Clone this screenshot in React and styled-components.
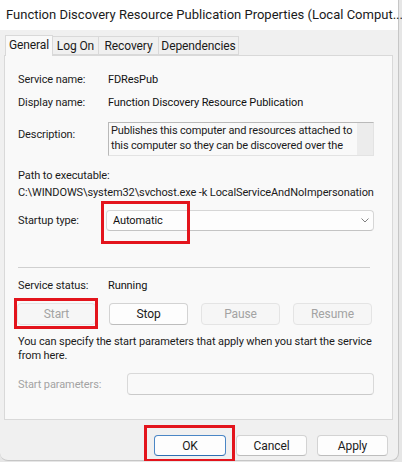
import React from 'react'
import styled, { createGlobalStyle } from 'styled-components'

const GlobalStyle = createGlobalStyle`
  html, body {
    margin: 0;
    padding: 0;
  }
  body {
    background: #e6e6e6;
    font-family: Roboto, "Noto Sans", "Liberation Sans", sans-serif;
    font-size: 11px;
    letter-spacing: -0.1px;
    color: #1b1b1b;
  }
`

const Window = styled.div`
  width: 398px;
  height: 460px;
  background: #f0f0f0;
  border-right: 1px solid #c6c6c6;
  border-bottom: 1px solid #c6c6c6;
  border-radius: 0 0 8px 8px;
  display: flex;
  flex-direction: column;
`

const TitleBar = styled.div`
  height: 28px;
  display: flex;
  align-items: center;
  justify-content: space-between;
  padding: 0 9px 2px 6px;
  background: #ffffff;
`

const Title = styled.div`
  font-size: 13px;
  letter-spacing: 0;
  color: #1a1a1a;
  white-space: nowrap;
`

const Body = styled.div`
  flex: 1;
  display: flex;
  flex-direction: column;
  padding: 5px 5px 0 4px;
`

const Tabs = styled.div`
  display: flex;
  align-items: flex-end;
  height: 20px;
  padding-left: 1px;
`

const Tab = styled.div`
  position: relative;
  display: flex;
  align-items: center;
  justify-content: center;
  width: ${p => p.$w}px;
  height: ${p => (p.$active ? 21 : 19)}px;
  margin-bottom: ${p => (p.$active ? -1 : 0)}px;
  padding-bottom: ${p => (p.$active ? 2 : 0)}px;
  box-sizing: border-box;
  background: ${p => (p.$active ? '#f9f9f9' : '#f0f0f0')};
  border: 1px solid #d9d9d9;
  border-bottom: ${p => (p.$active ? 'none' : '1px solid #d9d9d9')};
  border-left-width: ${p => (p.$first || p.$active ? 1 : 0)}px;
  z-index: ${p => (p.$active ? 1 : 0)};
  color: #1a1a1a;
  font-size: 12px;
`

const Panel = styled.div`
  height: 365px;
  box-sizing: border-box;
  background: #f9f9f9;
  border: 1px solid #d9d9d9;
  padding: 16px 18px 0 13px;
  display: flex;
  flex-direction: column;
`

const Row = styled.div`
  display: grid;
  grid-template-columns: ${p => p.$label || 90}px 1fr;
  align-items: ${p => (p.$top ? 'start' : 'center')};
  margin-top: ${p => p.$mt || 0}px;
  line-height: 15px;
`

const Label = styled.div`
  color: ${p => (p.$dim ? '#a3a3a3' : '#1b1b1b')};
  padding-top: ${p => p.$pt || 0}px;
`

const Value = styled.div`
  color: #111;
`

const Text = styled.div`
  margin-top: ${p => p.$mt || 0}px;
  line-height: ${p => p.$lh || 16}px;
  white-space: ${p => (p.$nowrap ? 'nowrap' : 'normal')};
`

const DescBox = styled.div`
  position: relative;
  height: 34px;
  box-sizing: border-box;
  overflow: hidden;
  border: 1px solid #b9b9b9;
  border-right-color: #e3e3e3;
  border-bottom-color: #e3e3e3;
  padding: 0 17px 0 2px;
  line-height: 15px;
  letter-spacing: -0.15px;
  background: #f9f9f9;

  &::after {
    content: '';
    position: absolute;
    top: 0;
    right: 0;
    width: 16px;
    height: 100%;
    background: #ececec;
  }
`

const Field = styled.div`
  position: relative;
`

const Select = styled.div`
  height: 21px;
  box-sizing: border-box;
  display: flex;
  align-items: center;
  justify-content: space-between;
  padding: 0 4px 0 6px;
  border: 1px solid #d6d6d6;
  border-bottom-color: #c4c4c4;
  border-radius: 4px;
  background: #fdfdfd;
  color: #111;
  margin-left: -2px;
`

const Separator = styled.div`
  height: 1px;
  background: #d0d0d0;
  margin: ${p => p.$mt}px 4px 0 0;
`

const ButtonRow = styled.div`
  display: grid;
  grid-template-columns: repeat(4, 79px);
  column-gap: 13px;
  margin: ${p => p.$mt}px 0 0 -1px;
`

const Button = styled.button`
  height: ${p => p.$h || 22}px;
  width: ${p => (p.$w ? p.$w + 'px' : 'auto')};
  box-sizing: border-box;
  font-family: inherit;
  font-size: 12px;
  letter-spacing: -0.1px;
  color: #1b1b1b;
  background: #fdfdfd;
  border: 1px solid ${p => (p.$primary ? '#4a86c5' : '#d3d3d3')};
  border-bottom-color: ${p => (p.$primary ? '#2f6fb3' : '#bdbdbd')};
  border-radius: 4px;
  padding: 0;

  &:disabled {
    color: #a3a3a3;
    background: #f6f6f6;
    border-color: #e4e4e4;
  }
`

const Input = styled.div`
  height: 22px;
  box-sizing: border-box;
  border: 1px solid #d9d9d9;
  border-bottom-color: #cacaca;
  border-radius: 4px;
  background: #f9f9f9;
`

const Footer = styled.div`
  display: flex;
  justify-content: flex-end;
  gap: 10px;
  padding: 15px 5px 0 0;
`

const Highlight = styled.div`
  position: absolute;
  top: ${p => p.$t}px;
  left: ${p => p.$l}px;
  width: ${p => p.$w}px;
  height: ${p => p.$h}px;
  box-sizing: border-box;
  border: 3px solid #e3141c;
  pointer-events: none;
  z-index: 2;
`

const CloseIcon = () => (
  <svg width="11" height="11" viewBox="0 0 11 11">
    <path d="M0.5 0.5 L10.5 10.5 M10.5 0.5 L0.5 10.5" stroke="#1a1a1a" strokeWidth="1" fill="none" />
  </svg>
)

const Chevron = () => (
  <svg width="8" height="5" viewBox="0 0 8 5">
    <path d="M0.5 0.5 L4 4 L7.5 0.5" stroke="#808080" strokeWidth="1" fill="none" />
  </svg>
)

export default function App() {
  return (
    <>
      <GlobalStyle />
      <Window>
        <TitleBar>
          <Title>Function Discovery Resource Publication Properties (Local Comput...</Title>
          <CloseIcon />
        </TitleBar>
        <Body>
          <Tabs>
            <Tab $active $first $w={48}>General</Tab>
            <Tab $w={46}>Log On</Tab>
            <Tab $w={60}>Recovery</Tab>
            <Tab $w={80}>Dependencies</Tab>
          </Tabs>
          <Panel>
            <Row>
              <Label>Service name:</Label>
              <Value>FDResPub</Value>
            </Row>
            <Row $mt={8}>
              <Label>Display name:</Label>
              <Value>Function Discovery Resource Publication</Value>
            </Row>
            <Row $mt={12} $top>
              <Label $pt={5}>Description:</Label>
              <DescBox>
                Publishes this computer and resources attached to this computer so they can be
                discovered over the network.&nbsp; If this service is stopped, network resources
                will no longer be published and they will not be discovered.
              </DescBox>
            </Row>
            <Text $mt={12}>Path to executable:</Text>
            <Text $mt={1} $nowrap>C:\WINDOWS\system32\svchost.exe -k LocalServiceAndNoImpersonation</Text>
            <Row $mt={9}>
              <Label>Startup type:</Label>
              <Field>
                <Select>
                  <span>Automatic</span>
                  <Chevron />
                </Select>
                <Highlight $t={-9} $l={-7} $w={89} $h={43} />
              </Field>
            </Row>
            <Separator $mt={36} />
            <Row $mt={10}>
              <Label>Service status:</Label>
              <Value>Running</Value>
            </Row>
            <ButtonRow $mt={10}>
              <Field>
                <Button $w={79} disabled>Start</Button>
                <Highlight $t={-5} $l={-3} $w={84} $h={31} />
              </Field>
              <Button>Stop</Button>
              <Button disabled>Pause</Button>
              <Button disabled>Resume</Button>
            </ButtonRow>
            <Text $mt={10} $lh={14}>
              You can specify the start parameters that apply when you start the service from here.
            </Text>
            <Row $mt={10} $label={109}>
              <Label $dim>Start parameters:</Label>
              <Input />
            </Row>
          </Panel>
          <Footer>
            <Field>
              <Button $primary $w={72} $h={21}>OK</Button>
              <Highlight $t={-10} $l={-10} $w={91} $h={37} />
            </Field>
            <Button $w={71} $h={21}>Cancel</Button>
            <Button $w={71} $h={21}>Apply</Button>
          </Footer>
        </Body>
      </Window>
    </>
  )
}
